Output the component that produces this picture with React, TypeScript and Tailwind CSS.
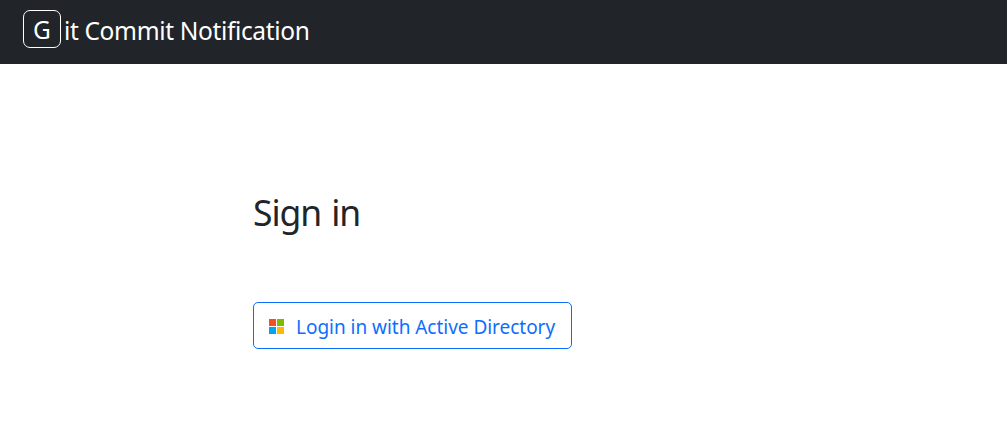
export default function App() {
  return (
    <div className="min-h-screen bg-white font-['Noto_Sans',sans-serif] text-[#212529]">
      <header className="flex h-16 items-start bg-[#212529] pt-[10px] pl-[23px] text-[24.5px] leading-[38px] whitespace-nowrap text-white">
        <span className="flex h-[38px] w-[38px] items-center justify-center rounded-[7px] border border-white pt-[2px]">
          G
        </span>
        <span className="ml-[3px] pt-[2px] tracking-[-0.35px]">it Commit Notification</span>
      </header>
      <main className="pt-[124px] pl-[253px]">
        <h1 className="h-12 text-[35.5px] leading-[48px] tracking-[-1.1px] [word-spacing:2px]">Sign in</h1>
        <button className="mt-[66px] flex h-[47px] w-[319px] items-center rounded-[5px] border border-[#0d6efd] pl-[15px] text-[19px] leading-[30px] tracking-[-0.03px] whitespace-nowrap text-[#0d6efd]">
          <svg className="mt-px mr-[12px] h-[15px] w-[15px] shrink-0" viewBox="0 0 15 15" shapeRendering="crispEdges" aria-hidden="true">
            <rect width="7" height="7" fill="#f25022" />
            <rect x="8" width="7" height="7" fill="#7fba00" />
            <rect y="8" width="7" height="7" fill="#00a4ef" />
            <rect x="8" y="8" width="7" height="7" fill="#ffb900" />
          </svg>
          <span className="pt-[2px]">Login in with Active Directory</span>
        </button>
      </main>
    </div>
  );
}
